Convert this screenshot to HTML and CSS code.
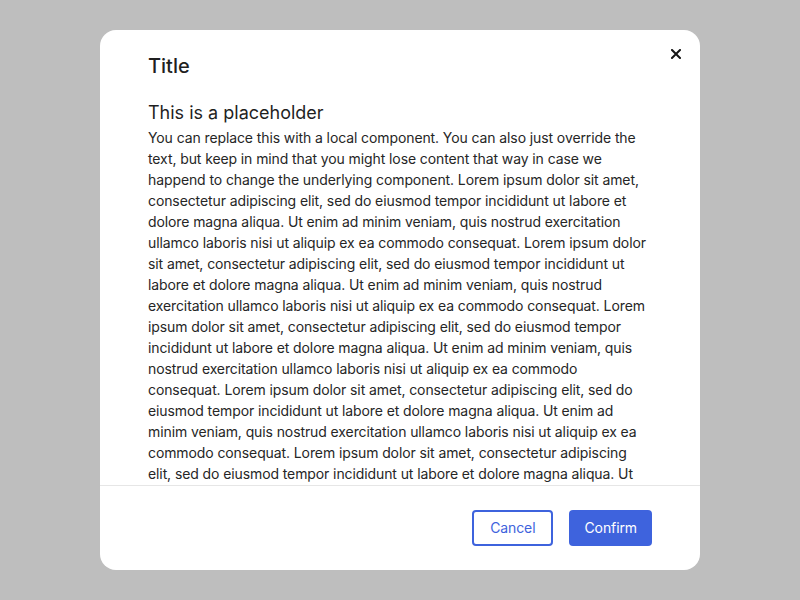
FILE: index.html
```html
<!DOCTYPE html>
<html lang="en">
<head>
<meta charset="utf-8">
<title>Modal</title>
<link rel="stylesheet" href="styles.css">
</head>
<body>
<div class="modal" role="dialog" aria-labelledby="modal-title">
  <header class="modal-header">
    <h1 id="modal-title" class="modal-title">Title</h1>
    <button class="close-btn" aria-label="Close">
      <svg width="10" height="10" viewBox="0 0 10 10" aria-hidden="true">
        <path d="M1 1 L9 9 M9 1 L1 9" stroke="#161616" stroke-width="2" stroke-linecap="square" fill="none"/>
      </svg>
    </button>
  </header>
  <div class="modal-body">
    <h2 class="placeholder-title">This is a placeholder</h2>
    <p class="placeholder-text">You can replace this with a local component. You can also just override the text, but keep in mind that you might lose content that way in case we happend to change the underlying component. Lorem ipsum dolor sit amet, consectetur adipiscing elit, sed do eiusmod tempor incididunt ut labore et dolore magna aliqua. Ut enim ad minim veniam, quis nostrud exercitation ullamco laboris nisi ut aliquip ex ea commodo consequat. Lorem ipsum dolor sit amet, consectetur adipiscing elit, sed do eiusmod tempor incididunt ut labore et dolore magna aliqua. Ut enim ad minim veniam, quis nostrud exercitation ullamco laboris nisi ut aliquip ex ea commodo consequat. Lorem ipsum dolor sit amet, consectetur adipiscing elit, sed do eiusmod tempor incididunt ut labore et dolore magna aliqua. Ut enim ad minim veniam, quis nostrud exercitation ullamco laboris nisi ut aliquip ex ea commodo consequat. Lorem ipsum dolor sit amet, consectetur adipiscing elit, sed do eiusmod tempor incididunt ut labore et dolore magna aliqua. Ut enim ad minim veniam, quis nostrud exercitation ullamco laboris nisi ut aliquip ex ea commodo consequat. Lorem ipsum dolor sit amet, consectetur adipiscing elit, sed do eiusmod tempor incididunt ut labore et dolore magna aliqua. Ut enim ad minim veniam, quis nostrud exercitation ullamco laboris nisi ut aliquip ex ea commodo consequat. Lorem ipsum dolor sit amet, consectetur adipiscing elit, sed do eiusmod tempor incididunt ut labore et dolore magna aliqua. Ut enim ad minim veniam, quis nostrud exercitation ullamco laboris nisi ut aliquip ex ea commodo consequat.</p>
  </div>
  <footer class="modal-footer">
    <button class="btn btn-secondary">Cancel</button>
    <button class="btn btn-primary">Confirm</button>
  </footer>
</div>
</body>
</html>
```

FILE: styles.css
```css
* { box-sizing: border-box; }

html, body {
  margin: 0;
  height: 100%;
}

body {
  background: #bebebe;
  font-family: Inter, "Noto Sans", sans-serif;
  color: #1f1f1f;
  display: flex;
  justify-content: center;
  align-items: center;
}

.modal {
  position: relative;
  width: 600px;
  height: 540px;
  background: #ffffff;
  border-radius: 16px;
  display: flex;
  flex-direction: column;
  overflow: hidden;
}

.modal-header {
  padding: 22px 48px 0;
}

.modal-title {
  margin: 0;
  font-size: 20px;
  line-height: 28px;
  font-weight: 500;
  color: #1f1f1f;
}

.close-btn {
  position: absolute;
  top: 19px;
  right: 19px;
  width: 10px;
  height: 10px;
  padding: 0;
  border: 0;
  background: transparent;
  cursor: pointer;
  display: flex;
}

.modal-body {
  flex: 1;
  min-height: 0;
  overflow-y: auto;
  scrollbar-width: none;
  padding: 19px 48px 24px;
}

.placeholder-title {
  margin: 0;
  font-size: 18px;
  line-height: 28px;
  font-weight: 400;
  color: #1f1f1f;
}

.placeholder-text {
  margin: 0;
  font-size: 14px;
  line-height: 21px;
  letter-spacing: -0.1px;
  color: #262626;
}

.modal-footer {
  border-top: 1px solid #e6e6e6;
  height: 85px;
  flex: none;
  display: flex;
  justify-content: flex-end;
  align-items: center;
  gap: 16px;
  padding: 0 48px;
}

.btn {
  height: 36px;
  padding: 0 16px;
  border-radius: 4px;
  font-family: Inter, "Noto Sans", sans-serif;
  font-size: 14px;
  line-height: 20px;
  letter-spacing: -0.1px;
  cursor: pointer;
}

.btn-secondary {
  background: #ffffff;
  color: #3e63dd;
  border: 2px solid #3e63dd;
}

.btn-primary {
  background: #3e63dd;
  color: #ffffff;
  border: 0;
  padding: 0 15px;
}
```
